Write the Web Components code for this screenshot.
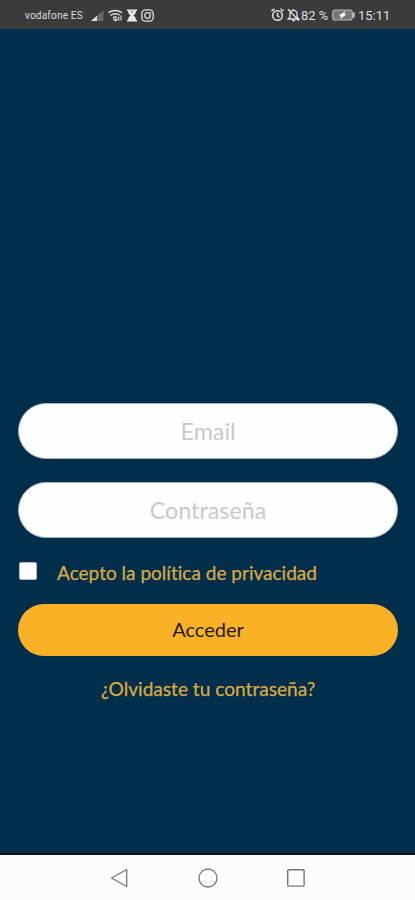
<!DOCTYPE html>
<html lang="es">
<head>
<meta charset="utf-8">
<title>Acceso</title>
<style>
html,body{margin:0;height:100%;background:#002e4b;overflow:hidden}
</style>
</head>
<body>
<login-screen></login-screen>
<script>
const define = (name, html) => customElements.define(name, class extends HTMLElement {
  constructor() {
    super();
    const t = document.createElement('template');
    t.innerHTML = html;
    this.attachShadow({mode: 'open'}).append(t.content.cloneNode(true));
  }
});

define('status-bar', `<style>
:host{display:flex;justify-content:space-between;align-items:center;height:29px;padding:1px 24px 0 25px;box-sizing:border-box;background:#3b3b3b;color:#dedede;font-family:Roboto,sans-serif;white-space:nowrap}
div{display:flex;align-items:center}
svg{display:block;flex:none}
.carrier{font-size:10px;width:59px;letter-spacing:.2px;margin-right:7px}
.icons{gap:4px}
.num{font-size:13px}
</style>
<div><span class="carrier">vodafone ES</span><div class="icons">
<svg width="13" height="13" viewBox="0 0 13 13"><path d="M0 12 12.5 1V12Z" fill="#686868"/><path d="M0 12 6 6.7V12Z" fill="#dedede"/></svg>
<svg width="15" height="13" viewBox="0 0 15 13" fill="none" stroke="#dedede" stroke-width="1.6"><path d="M.5 3.6Q7-.6 14 3.6M2.5 6.3Q7 3.2 11.6 6.1M5 8.8Q7 7.3 8.8 8.6"/><path d="m6 10.3 1.4 1.6L9 10.3ZM13 6.5v5M10.7 7.7v4" stroke-width="1.1"/></svg>
<svg width="10" height="13" viewBox="0 0 10 13" fill="#e8e8e8"><path d="M0 .5h10V2H9C9 4.3 7.8 5.4 6.3 6.5 7.8 7.6 9 8.7 9 11h1v1.5H0V11h1c0-2.3 1.2-3.4 2.7-4.5C2.2 5.4 1 4.3 1 2H0Z"/><path d="M3.2 2.3h3.6L5 3.6Z" fill="#6a6a6a"/></svg>
<svg width="13" height="13" viewBox="0 0 13 13" fill="none" stroke="#dedede" stroke-width="1.3"><rect x=".8" y=".8" width="11.4" height="11.4" rx="3.6"/><circle cx="6.5" cy="6.5" r="2.8"/><path d="M9.3 3.4h1"/></svg>
</div></div>
<div>
<svg width="13" height="14" viewBox="0 0 13 14" fill="none" stroke="#dedede" stroke-width="1.5"><circle cx="6.5" cy="7.5" r="4.8"/><path d="M.5 3.2 3.5.8M12.5 3.2 9.5.8M6.5 4.8v3l2 1.3"/></svg>
<svg style="margin-left:3px" width="13" height="14" viewBox="0 0 13 14" fill="none" stroke="#dedede" stroke-width="1.3"><path d="M1.3 11h10.4L10 9V5.7C10 3.6 8.4 2.4 6.5 2.4S3 3.6 3 5.7V9ZM6.5 1v1.4M5 12.7h3M1 1.3l11 11.4"/></svg>
<span class="num" style="width:28px;margin-left:1px">82 %</span>
<svg style="margin-left:3px" width="23" height="12" viewBox="0 0 23 12"><rect x=".7" y="1" width="19.6" height="10" rx="2.6" fill="#777" stroke="#b8b8b8" stroke-width="1.1"/><path d="M21.8 3.5v5" stroke="#d5d5d5" stroke-width="1.6"/><path d="M13.5 2.2 6.8 6.5 9 7 8 9.9 14.4 5.5 12.2 5Z" fill="#fff"/></svg>
<span class="num" style="margin-left:3px;width:33px">15:11</span>
</div>`);

define('pill-field', `<style>
:host{display:flex;height:56px;align-items:center;justify-content:center;box-sizing:border-box;border:1px solid #a5b2c0;border-radius:28px;background:#fefefe;color:#c9c9c9;font-size:23.3px;padding-bottom:1px}
</style><slot></slot>`);

define('check-row', `<style>
:host{display:flex;align-items:center;height:24px;color:#dda942;font-size:19.05px;-webkit-text-stroke:.25px #dda942;font-variant-ligatures:none}
i{width:18px;height:18px;box-sizing:border-box;border:1px solid #b5b9c2;border-radius:2px;background:#fff;margin:0 20px 4px 1px}
span{padding-bottom:2px}
</style><i></i><span><slot></slot></span>`);

define('pill-button', `<style>
:host{display:flex;height:52px;align-items:center;justify-content:center;border-radius:26px;background:#f9b126;color:#1d1b17;font-size:20px;padding-bottom:2px;box-sizing:border-box}
</style><slot></slot>`);

define('text-link', `<style>
:host{display:block;text-align:center;color:#dda942;font-size:19.1px;line-height:24px;-webkit-text-stroke:.25px #dda942}
</style><slot></slot>`);

define('nav-bar', `<style>
:host{display:flex;justify-content:center;gap:68px;height:47px;box-sizing:border-box;border-top:2px solid #060f22;background:#fcfcfc;padding-top:13px}
svg{display:block}
</style>
<svg width="20" height="20" viewBox="0 0 20 20" fill="none" stroke="#777" stroke-width="1.3" stroke-linejoin="round"><path d="M1.5 10 16.7 1.5v17Z"/></svg>
<svg width="20" height="20" viewBox="0 0 20 20" fill="none" stroke="#777" stroke-width="1.3"><circle cx="10" cy="10" r="9"/></svg>
<svg width="20" height="20" viewBox="0 0 20 20" fill="none" stroke="#777" stroke-width="1.4"><rect x="1.7" y="1.7" width="16.4" height="16.4" rx="1"/></svg>`);

define('login-screen', `<style>
:host{display:flex;flex-direction:column;width:415px;height:900px;background:#002e4b;font-family:Lato,sans-serif}
main{flex:1;display:flex;flex-direction:column;padding:374px 17px 0 18px}
pill-field+pill-field{margin-top:23px}
check-row{margin-top:23px}
pill-button{margin-top:19px}
text-link{margin-top:21px}
</style>
<status-bar></status-bar>
<main>
<pill-field>Email</pill-field>
<pill-field>Contraseña</pill-field>
<check-row>Acepto la política de privacidad</check-row>
<pill-button>Acceder</pill-button>
<text-link>¿Olvidaste tu contraseña?</text-link>
</main>
<nav-bar></nav-bar>`);
</script>
</body>
</html>
